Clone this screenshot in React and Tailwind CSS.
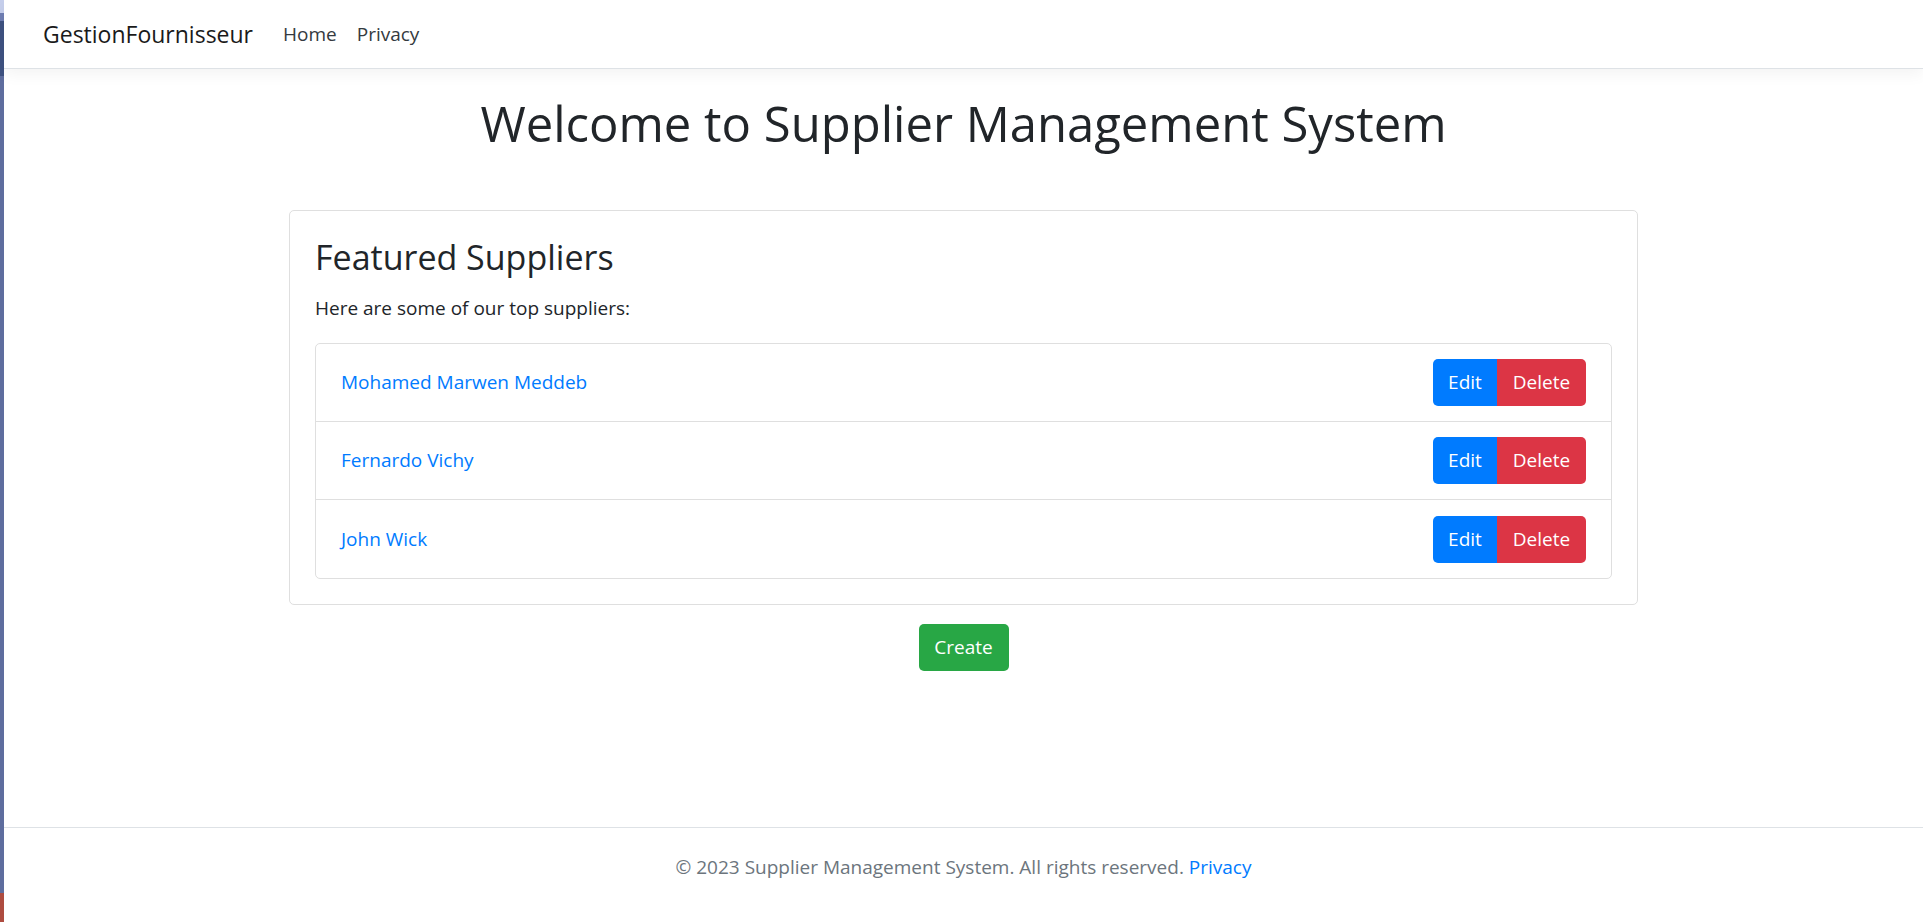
import React from 'react'

const suppliers = ['Mohamed Marwen Meddeb', 'Fernardo Vichy', 'John Wick']

function Strip() {
  return (
    <div className="flex w-[4px] shrink-0 flex-col">
      <div className="h-[13px] bg-[#c6cfec]" />
      <div className="h-[8px] bg-[#6f7eb3]" />
      <div className="h-[55px] bg-[#3e5281]" />
      <div className="flex-1 bg-[#5e6d9e]" />
      <div className="h-[29px] bg-[#ae4c40]" />
    </div>
  )
}

function SupplierRow({ name, last }) {
  return (
    <li className={`flex h-[78px] items-center justify-between px-[25px] ${last ? '' : 'border-b border-[#dfdfdf]'}`}>
      <a href="#" className="text-[19px] text-[#007bff]">{name}</a>
      <div className="flex">
        <button className="h-[47px] w-[64px] rounded-l-[5px] bg-[#007bff] text-[19px] text-white">Edit</button>
        <button className="h-[47px] w-[89px] rounded-r-[5px] bg-[#dc3545] text-[19px] text-white">Delete</button>
      </div>
    </li>
  )
}

export default function App() {
  return (
    <div className="flex h-[922px] w-full bg-white font-['Open_Sans',sans-serif] text-[#212529]">
      <Strip />
      <div className="flex min-w-0 flex-1 flex-col">
        <nav className="flex h-[69px] items-center border-b border-[#dee2e6] bg-white pl-[39px] shadow-[0_5px_15px_rgba(0,0,0,0.05)]">
          <a href="#" className="mr-[20px] text-[23px] text-[#1a1a1a]">GestionFournisseur</a>
          <a href="#" className="px-[10px] text-[19px] text-[#343a40]">Home</a>
          <a href="#" className="px-[10px] text-[19px] text-[#343a40]">Privacy</a>
        </nav>

        <main className="flex flex-1 flex-col items-center">
          <h1 className="mt-[24px] text-[49px] leading-[60px] font-medium">Welcome to Supplier Management System</h1>

          <div className="mt-[57px] w-[1349px] rounded-[5px] border border-[#dfdfdf] p-[25px]">
            <h3 className="text-[34px] leading-[42px] font-medium">Featured Suppliers</h3>
            <p className="mt-[15px] text-[19px] leading-[30px]">Here are some of our top suppliers:</p>
            <ul className="mt-[20px] rounded-[5px] border border-[#dfdfdf]">
              {suppliers.map((s, i) => (
                <SupplierRow key={s} name={s} last={i === suppliers.length - 1} />
              ))}
            </ul>
          </div>

          <button className="mt-[19px] h-[47px] w-[90px] rounded-[5px] bg-[#28a745] text-[19px] text-white">Create</button>
        </main>

        <footer className="mb-[18px] h-[77px] border-t border-[#dee2e6] text-center text-[19px] leading-[78px] text-[#6c757d]">
          © 2023 Supplier Management System. All rights reserved. <a href="#" className="text-[#007bff]">Privacy</a>
        </footer>
      </div>
    </div>
  )
}
